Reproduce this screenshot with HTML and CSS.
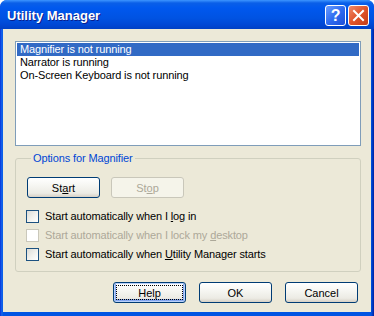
FILE: index.html
```
<html>
<head>
    <link rel="stylesheet" href="styles.css">
</head>
<body>
<div class="window">
    <div class="titlebar">
        <span class="title">Utility Manager</span>
        <div class="caption-buttons">
            <span class="cap-btn cap-help">?</span>
            <span class="cap-btn cap-close">
                <svg width="21" height="21" viewBox="0 0 21 21">
                    <path d="M6 6 L15 15 M15 6 L6 15" stroke="#fff" stroke-width="2" stroke-linecap="square"/>
                </svg>
            </span>
        </div>
    </div>
    <div class="client">
        <ul class="listbox">
            <li class="selected">Magnifier is not running</li>
            <li>Narrator is running</li>
            <li>On-Screen Keyboard is not running</li>
        </ul>
        <fieldset class="group">
            <legend>Options for Magnifier</legend>
            <div class="actions">
                <button class="btn">St<u>a</u>rt</button>
                <button class="btn" disabled>St<u>o</u>p</button>
            </div>
            <div class="checks">
                <label class="check"><span class="box"></span><span>Start automatically when I <u>l</u>og in</span></label>
                <label class="check disabled"><span class="box"></span><span>Start automatically when I lock my <u>d</u>esktop</span></label>
                <label class="check"><span class="box"></span><span>Start automatically when <u>U</u>tility Manager starts</span></label>
            </div>
        </fieldset>
        <div class="footer">
            <button class="btn default">Help</button>
            <button class="btn">OK</button>
            <button class="btn">Cancel</button>
        </div>
    </div>
</div>
</body>
</html>
```

FILE: styles.css
```
body {
    margin: 0;
    background: #ffffff;
    font-family: "Liberation Sans", Arial, sans-serif;
    font-size: 11px;
    letter-spacing: -0.12px;
}

.window {
    width: 374px;
    height: 316px;
    display: flex;
    flex-direction: column;
    background: linear-gradient(90deg, #0831d9 0, #166aee 2px, #0054e3 3px, #0054e3 371px, #0043cf 372px, #001ea0 374px);
    border-radius: 7px 7px 0 0;
    overflow: hidden;
}

.titlebar {
    height: 29px;
    flex: none;
    display: flex;
    align-items: center;
    justify-content: space-between;
    background: linear-gradient(180deg, #3d95ff 0, #0a5fe8 3px, #0058ee 8px, #0053e2 18px, #0047d4 25px, #0040c4 29px);
}

.title {
    color: #ffffff;
    font-weight: bold;
    font-size: 13px;
    letter-spacing: 0;
    margin-left: 7px;
    margin-top: 1px;
    text-shadow: 1px 1px 0 #0a1e8c;
}

.caption-buttons {
    display: flex;
    gap: 2px;
    margin-right: 5px;
    margin-top: 2px;
}

.cap-btn {
    width: 19px;
    height: 19px;
    border: 1px solid #ffffff;
    border-radius: 3px;
    display: flex;
    align-items: center;
    justify-content: center;
    color: #ffffff;
}

.cap-help {
    background: linear-gradient(135deg, #6a9cff 0, #2f6cf0 50%, #1c4fd8 100%);
    font-weight: bold;
    font-size: 16px;
}

.cap-close {
    background: linear-gradient(135deg, #f08a6a 0, #e0542b 50%, #c43b16 100%);
}

.cap-close svg {
    margin: -1px;
}

.client {
    flex: 1;
    margin: 0 3px 4px 3px;
    padding: 12px 10px 0 12px;
    background: #ece9d8;
    display: flex;
    flex-direction: column;
}

.listbox {
    list-style: none;
    margin: 0;
    padding: 1px;
    height: 101px;
    border: 1px solid #7f9db9;
    background: #ffffff;
}

.listbox li {
    height: 13px;
    line-height: 13px;
    padding-left: 3px;
    color: #000000;
}

.listbox li.selected {
    background: #316ac5;
    color: #ffffff;
}

.group {
    margin: 6px 0 0 0;
    padding: 12px 11px 10px 11px;
    border: 1px solid #d0d0bf;
    border-radius: 3px;
}

.group legend {
    color: #0046d5;
    padding: 0 2px;
    margin-left: 4px;
    line-height: 13px;
}

.actions {
    display: flex;
    gap: 11px;
}

.btn {
    width: 73px;
    height: 21px;
    padding: 0;
    font-family: "Liberation Sans", Arial, sans-serif;
    font-size: 11px;
    color: #000000;
    border: 1px solid #003c74;
    border-radius: 3px;
    background: linear-gradient(180deg, #ffffff 0, #f6f6f2 40%, #ecebe4 80%, #d6d0c5 100%);
}

.btn:disabled {
    color: #aca899;
    border-color: #c9c7ba;
    background: #f5f4ea;
}

.btn.default {
    box-shadow: inset 0 0 0 1px #b9d1fa, inset 0 -1px 0 2px #84a6f0;
    outline: 1px dotted #000000;
    outline-offset: -4px;
}

.checks {
    display: flex;
    flex-direction: column;
    gap: 6px;
    margin-top: 12px;
}

.check {
    display: flex;
    align-items: center;
    height: 13px;
    line-height: 13px;
    margin-left: -1px;
}

.box {
    width: 11px;
    height: 11px;
    margin-right: 6px;
    border: 1px solid #1c5180;
    background: linear-gradient(135deg, #dcdcd7 0, #f4f4f0 60%, #ffffff 100%);
}

.check.disabled {
    color: #aca899;
}

.check.disabled .box {
    border-color: #cac8bb;
    background: #ffffff;
}

.footer {
    display: flex;
    justify-content: flex-end;
    gap: 13px;
    margin-top: 10px;
    margin-right: 3px;
}
```
